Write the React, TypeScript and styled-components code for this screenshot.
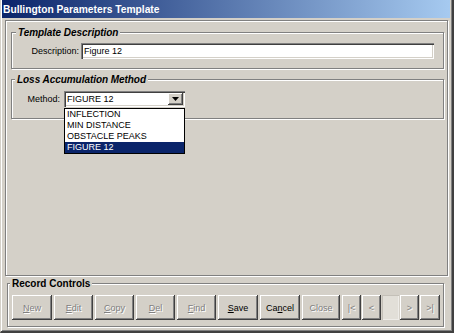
import React from "react";
import styled, { createGlobalStyle } from "styled-components";

const Global = createGlobalStyle`
  html, body { margin: 0; padding: 0; background: #d4d0c8; }
  body { font-family: "Liberation Sans", Arial, sans-serif; }
`;

const Window = styled.div`
  box-sizing: border-box;
  width: 454px;
  height: 333px;
  background: #d4d0c8;
  border-left: 1px solid #d4d0c8;
  border-right: 2px solid #404040;
  border-bottom: 2px solid #404040;
  box-shadow: inset 1px 0 0 #ffffff, inset -1px -1px 0 #808080;
  padding: 0 2px 0 1px;
  display: flex;
  flex-direction: column;
  font-family: "Liberation Sans", Arial, sans-serif;
  overflow: hidden;
`;

const TitleBar = styled.div`
  flex: none;
  height: 18px;
  margin-bottom: 2px;
  padding-left: 1px;
  display: flex;
  align-items: center;
  background: linear-gradient(to right, #0a246a, #a6caf0);
  color: #ffffff;
  font-weight: bold;
  font-size: 10.25px;
  white-space: nowrap;
`;

const MainPanel = styled.div`
  box-sizing: border-box;
  flex: none;
  height: 256px;
  margin: 0 2px 0 3px;
  border: 1px solid #808080;
  box-shadow: inset 1px 1px 0 #ffffff, 1px 1px 0 #ffffff;
  display: flex;
  flex-direction: column;
`;

const GroupBox = styled.div<{ $top: number; $left: number; $right: number; $height?: number }>`
  box-sizing: border-box;
  position: relative;
  flex: none;
  margin: ${(p) => p.$top}px ${(p) => p.$right}px 0 ${(p) => p.$left}px;
  ${(p) => (p.$height ? `height: ${p.$height}px;` : "")}
  border: 1px solid #808080;
  box-shadow: inset 1px 1px 0 #ffffff, 1px 1px 0 #ffffff;
`;

const Legend = styled.span<{ $italic?: boolean; $left: number }>`
  position: absolute;
  top: -6px;
  left: ${(p) => p.$left}px;
  padding: 0 2px;
  background: #d4d0c8;
  font-size: 10px;
  line-height: 12px;
  font-weight: bold;
  font-style: ${(p) => (p.$italic ? "italic" : "normal")};
  letter-spacing: ${(p) => (p.$italic ? "-0.05px" : "0")};
  color: #000;
  white-space: nowrap;
`;

const FieldRow = styled.div<{ $pt: number; $pb: number; $gap: number }>`
  display: flex;
  align-items: center;
  gap: ${(p) => p.$gap}px;
  padding: ${(p) => p.$pt}px 0 ${(p) => p.$pb}px 0;
`;

const Label = styled.span<{ $w: number }>`
  width: ${(p) => p.$w}px;
  text-align: right;
  font-size: 9px;
  color: #000;
  white-space: nowrap;
`;

const sunken = `
  box-shadow: inset 1px 1px 0 #808080, inset 2px 2px 0 #404040,
    inset -1px -1px 0 #ffffff, inset -2px -2px 0 #d4d0c8;
`;

const TextBox = styled.div<{ $w: number }>`
  box-sizing: border-box;
  width: ${(p) => p.$w}px;
  height: 16px;
  padding: 0 3px;
  display: flex;
  align-items: center;
  background: #ffffff;
  ${sunken}
  font-size: 9px;
  color: #000;
`;

const ComboWrap = styled.div`
  position: relative;
`;

const Combo = styled.div<{ $w: number }>`
  box-sizing: border-box;
  width: ${(p) => p.$w}px;
  height: 16px;
  padding: 2px;
  display: flex;
  align-items: center;
  background: #ffffff;
  ${sunken}
`;

const ComboText = styled.span`
  flex: 1;
  padding-left: 1px;
  font-size: 9px;
  color: #000;
`;

const ComboButton = styled.span`
  box-sizing: border-box;
  flex: none;
  width: 15px;
  height: 12px;
  display: flex;
  align-items: center;
  justify-content: center;
  background: #d4d0c8;
  box-shadow: inset -1px -1px 0 #404040, inset 1px 1px 0 #ffffff, inset -2px -2px 0 #808080;
`;

const DropList = styled.div`
  position: absolute;
  top: 100%;
  left: 0;
  right: 0;
  z-index: 5;
  margin-top: 1px;
  border: 1px solid #000000;
  background: #ffffff;
`;

const DropItem = styled.div<{ $selected?: boolean }>`
  height: 11px;
  line-height: 11px;
  padding-left: 2px;
  font-size: 9px;
  background: ${(p) => (p.$selected ? "#0a246a" : "#ffffff")};
  color: ${(p) => (p.$selected ? "#ffffff" : "#000000")};
`;

const ButtonRow = styled.div`
  display: flex;
  gap: 2px;
  padding: 11px 0 0 4px;
`;

const NavGroup = styled.div`
  display: flex;
  gap: 1px;
`;

const Btn = styled.div<{ $w: number; $off?: boolean }>`
  box-sizing: border-box;
  width: ${(p) => p.$w}px;
  height: 25px;
  display: flex;
  align-items: center;
  justify-content: center;
  background: #d4d0c8;
  box-shadow: inset -1px -1px 0 #404040, inset 1px 1px 0 #ffffff, inset -2px -2px 0 #808080;
  font-size: 9px;
  color: ${(p) => (p.$off ? "#808080" : "#000000")};
  text-shadow: ${(p) => (p.$off ? "1px 1px 0 #ffffff" : "none")};
  white-space: nowrap;
`;

const NavField = styled.div`
  box-sizing: border-box;
  width: 17px;
  height: 25px;
  background: #e2dfd8;
  box-shadow: inset 1px 1px 0 #c4c0b8, inset -1px -1px 0 #eeece8;
`;

const Key = styled.span`
  text-decoration: underline;
`;

type B = { w: number; pre?: string; key?: string; post: string; off?: boolean };

const mainButtons: B[] = [
  { w: 40, key: "N", post: "ew", off: true },
  { w: 39, key: "E", post: "dit", off: true },
  { w: 39, key: "C", post: "opy", off: true },
  { w: 39, key: "D", post: "el", off: true },
  { w: 39, key: "F", post: "ind", off: true },
  { w: 40, key: "S", post: "ave" },
  { w: 40, pre: "Ca", key: "n", post: "cel" },
  { w: 38, post: "Close", off: true },
];

export default function App() {
  return (
    <>
      <Global />
      <Window>
        <TitleBar>Bullington Parameters Template</TitleBar>
        <MainPanel>
          <GroupBox $top={11} $left={5} $right={3}>
            <Legend $italic $left={4}>Template Description</Legend>
            <FieldRow $pt={10} $pb={9} $gap={2}>
              <Label $w={67}>Description:</Label>
              <TextBox $w={353}>Figure 12</TextBox>
            </FieldRow>
          </GroupBox>
          <GroupBox $top={10} $left={5} $right={3}>
            <Legend $italic $left={3}>Loss Accumulation Method</Legend>
            <FieldRow $pt={11} $pb={11} $gap={4}>
              <Label $w={48}>Method:</Label>
              <ComboWrap>
                <Combo $w={121}>
                  <ComboText>FIGURE 12</ComboText>
                  <ComboButton>
                    <svg width="7" height="4" viewBox="0 0 7 4">
                      <polygon points="0,0 7,0 3.5,4" fill="#000" />
                    </svg>
                  </ComboButton>
                </Combo>
                <DropList>
                  <DropItem>INFLECTION</DropItem>
                  <DropItem>MIN DISTANCE</DropItem>
                  <DropItem>OBSTACLE PEAKS</DropItem>
                  <DropItem $selected>FIGURE 12</DropItem>
                </DropList>
              </ComboWrap>
            </FieldRow>
          </GroupBox>
        </MainPanel>
        <GroupBox $top={7} $left={5} $right={6} $height={44}>
          <Legend $left={2}>Record Controls</Legend>
          <ButtonRow>
            {mainButtons.map((b, i) => (
              <Btn key={i} $w={b.w} $off={b.off}>
                {b.pre}
                {b.key ? <Key>{b.key}</Key> : null}
                {b.post}
              </Btn>
            ))}
            <NavGroup>
              <Btn $w={19} $off>|&lt;</Btn>
              <Btn $w={19} $off>&lt;</Btn>
              <NavField />
              <Btn $w={19} $off>&gt;</Btn>
              <Btn $w={20} $off>&gt;|</Btn>
            </NavGroup>
          </ButtonRow>
        </GroupBox>
      </Window>
    </>
  );
}
